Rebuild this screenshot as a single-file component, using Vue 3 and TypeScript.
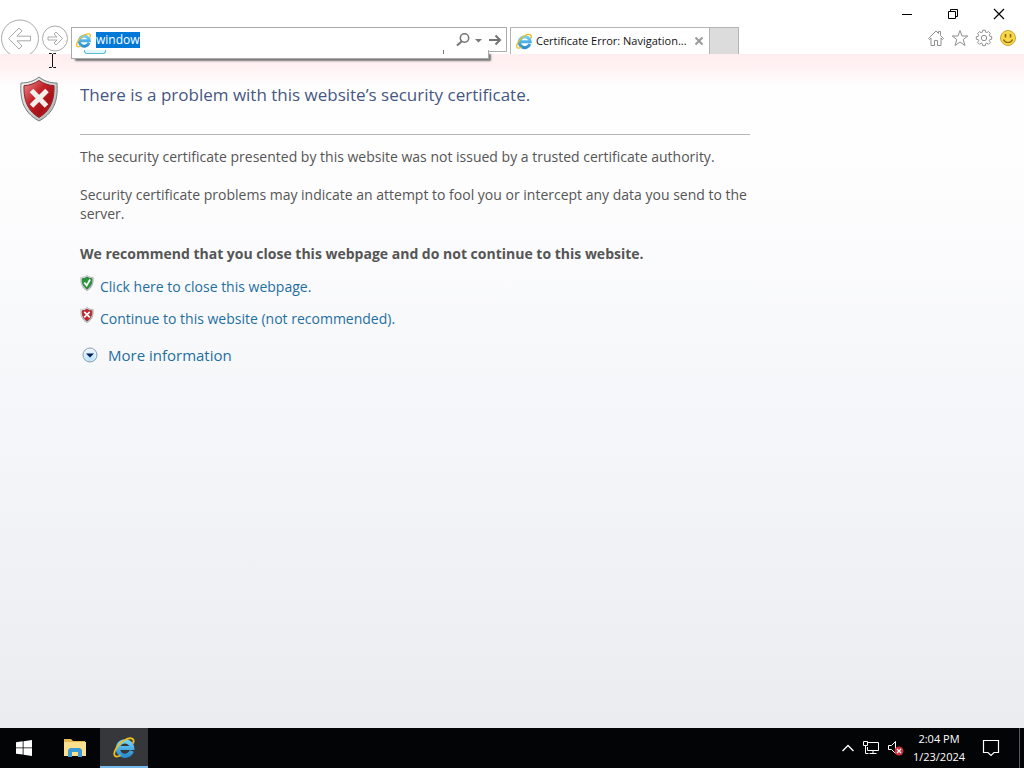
<script setup lang="ts">
import { nextTick, onMounted, ref } from 'vue'

const address = ref('window')
const addressBox = ref<HTMLInputElement | null>(null)
const tabs = [{ id: 1, title: 'Certificate Error: Navigation...' }]

onMounted(async () => {
  await nextTick()
  addressBox.value?.focus()
  addressBox.value?.select()
})
</script>

<template>
  <div class="desktop">
    <svg class="defs" width="0" height="0" aria-hidden="true">
      <defs>
        <linearGradient id="ieBlue" x1="0" y1="0" x2="0" y2="1">
          <stop offset="0" stop-color="#6fd0f6" />
          <stop offset="1" stop-color="#2a8fd4" />
        </linearGradient>
        <linearGradient id="shieldRed" x1="0" y1="0" x2="1" y2="1">
          <stop offset="0" stop-color="#e88f8f" />
          <stop offset="0.4" stop-color="#c4232b" />
          <stop offset="0.7" stop-color="#a80f17" />
          <stop offset="1" stop-color="#d9383c" />
        </linearGradient>
        <linearGradient id="shieldRim" x1="0" y1="0" x2="1" y2="1">
          <stop offset="0" stop-color="#f4f4f4" />
          <stop offset="1" stop-color="#a9adad" />
        </linearGradient>
        <radialGradient id="arrowBall" cx="0.5" cy="0.8" r="0.8">
          <stop offset="0" stop-color="#b7e4fa" />
          <stop offset="1" stop-color="#f4f8fc" />
        </radialGradient>
        <symbol id="ie" viewBox="0 0 24 24">
          <path fill="none" stroke="url(#ieBlue)" stroke-width="4.200" d="M19.800 16A7.200 7.200 0 1 1 20.200 13H7" />
          <path fill="none" stroke="#edbd21" stroke-width="1.800" d="M21 8.500C23.200 3.800 19.500 2 14.400 4.200 7.500 7.400 1.800 15.200 2.300 19.600c.4 2.600 3.200 2.400 6.400.6" />
        </symbol>
        <symbol id="shield" viewBox="0 0 40 46">
          <path fill="url(#shieldRim)" stroke="#777c7c" d="M20 1c5 4 11 6 18 6 1 14-1 29-18 38C3 36 1 21 2 7 9 7 15 5 20 1z" />
        </symbol>
      </defs>
    </svg>

    <header class="chrome">
      <nav class="nav" aria-label="History">
        <button class="plain" aria-label="Back">
          <svg width="40" height="35" viewBox="0 0 40 35" fill="none" stroke="#a9a9a9">
            <circle cx="20" cy="19.500" r="18.500" fill="#fff" />
            <path d="M8.500 19.500l10.500-10.500 3 3-5 5.200h13.500v4.600H17l5 5.200-3 3z" />
          </svg>
        </button>
        <button class="plain" aria-label="Forward">
          <svg width="28" height="35" viewBox="0 0 28 35" fill="none" stroke="#a9a9a9">
            <circle cx="14" cy="19.500" r="12.500" fill="#fff" />
            <path d="M21.500 19.500l-6.500-6.500-2 2 3 3H7v3h9l-3 3 2 2z" />
          </svg>
        </button>
      </nav>

      <form class="address" @submit.prevent>
        <svg width="17" height="18" aria-hidden="true"><use href="#ie" /></svg>
        <input ref="addressBox" v-model="address" type="text" aria-label="Address" spellcheck="false" autocomplete="off" />
        <button class="plain" type="button" aria-label="Search">
          <svg width="16" height="16" viewBox="0 0 16 16" fill="none" stroke="#737373">
            <circle cx="9.500" cy="6" r="4.200" stroke-width="1.500" />
            <path d="M6.500 9.500l-4.500 4" stroke-width="2" />
          </svg>
        </button>
        <button class="plain" type="button" aria-label="Show address list">
          <svg width="14" height="16" viewBox="0 0 14 16"><path d="M4 7h7l-3.500 3.500z" fill="#777" /></svg>
        </button>
        <button class="plain go" type="submit" aria-label="Go">
          <svg width="14" height="16" viewBox="0 0 14 16" fill="none" stroke="#737373" stroke-width="2"><path d="M1 8h11M7.500 3.500L12 8l-4.500 4.500" /></svg>
        </button>
        <div class="suggestions" aria-hidden="true">
          <span class="hint"></span><span class="tick"></span>
        </div>
      </form>

      <div class="tabs">
        <div v-for="tab in tabs" :key="tab.id" class="tab">
          <svg width="18" height="18" aria-hidden="true"><use href="#ie" /></svg>
          <span class="tab-title">{{ tab.title }}</span>
          <button class="plain" aria-label="Close tab">
            <svg width="10" height="10" viewBox="0 0 10 10" stroke="#9a9a9a" stroke-width="2"><path d="M1.500 1.500l7 7M8.500 1.500l-7 7" /></svg>
          </button>
        </div>
        <button class="new-tab" aria-label="New tab"></button>
      </div>

      <div class="corner">
        <div class="caption">
          <button class="plain" aria-label="Minimize"><svg width="12" height="12" viewBox="0 0 12 12" stroke="#000"><path d="M1 6.500h10" /></svg></button>
          <button class="plain" aria-label="Restore"><svg width="12" height="12" viewBox="0 0 12 12" stroke="#000" fill="none"><path d="M1.500 3.500h7v7h-7zM3.500 3.500v-2h7v7h-2" /></svg></button>
          <button class="plain" aria-label="Close"><svg width="12" height="12" viewBox="0 0 12 12" stroke="#000" stroke-width="1.200"><path d="M1 1l10 10M11 1L1 11" /></svg></button>
        </div>
        <div class="tools">
          <button class="plain" aria-label="Home">
            <svg width="18" height="18" viewBox="0 0 18 18" fill="none" stroke="#8f8f8f"><path d="M1.500 9.500L9 2l2.500 2.500v-2h2v4l3 3-1 1-1.500-1.500v7.500h-3.500v-5h-3v5H4V9L2.500 10.500z" /></svg>
          </button>
          <button class="plain" aria-label="Favorites">
            <svg width="18" height="18" viewBox="0 0 18 18" fill="none" stroke="#8f8f8f"><path d="M9 1.500l2 5.500h5.800l-4.600 3.600 1.800 5.900L9 13l-5 3.500 1.800-5.900L1.200 7H7z" /></svg>
          </button>
          <button class="plain" aria-label="Tools">
            <svg width="18" height="18" viewBox="0 0 18 18" fill="none" stroke="#8f8f8f">
              <path d="M7.300 3.200l.4-2h2.600l.4 2 1.100.5 1.700-1.200 1.900 1.900-1.200 1.700.5 1.100 2 .4v2.600l-2 .4-.5 1.100 1.200 1.700-1.900 1.900-1.700-1.200-1.100.5-.4 2H7.700l-.4-2-1.100-.5-1.700 1.200-1.900-1.900 1.200-1.700-.5-1.100-2-.4V7.700l2-.4.5-1.100-1.200-1.700 1.900-1.900 1.700 1.200z" /><circle cx="9" cy="9" r="2.700" />
            </svg>
          </button>
          <button class="plain" aria-label="Send feedback">
            <svg width="18" height="18" viewBox="0 0 18 18">
              <circle cx="9" cy="9" r="7.500" fill="#f8d848" stroke="#c9a63c" />
              <path d="M6.500 5v3.500M11.500 5v3.500" stroke="#8a6414" stroke-width="1.600" /><path d="M4.500 10.500c1.500 4 7.500 4 9 0" fill="none" stroke="#8a6414" stroke-width="1.200" />
            </svg>
          </button>
        </div>
      </div>
    </header>

    <main class="page">
      <svg class="big-shield" width="40" height="46" viewBox="0 0 40 46" aria-hidden="true">
        <use href="#shield" />
        <path fill="url(#shieldRed)" stroke="#8c2227" d="M20 4.500c4.500 3 9 4.800 15 5.200.3 12-2 24-15 31.800C7 33.700 4.700 21.700 5 9.700c6-.4 10.500-2.200 15-5.200z" />
        <path d="M12.500 14.500l15 15.500M28 14.500L12.500 30" stroke="#f3efeb" stroke-width="5" />
      </svg>
      <div class="content">
        <h1>There is a problem with this website’s security certificate.</h1>
        <p>The security certificate presented by this website was not issued by a trusted certificate authority.</p>
        <p>Security certificate problems may indicate an attempt to fool you or intercept any data you send to the server.</p>
        <p class="advice">We recommend that you close this webpage and do not continue to this website.</p>
        <div class="choice">
          <svg width="14" height="16" viewBox="0 0 40 46" aria-hidden="true">
            <use href="#shield" />
            <path fill="#28963b" stroke="#176b28" stroke-width="2" d="M20 6c4 3 8 4.500 14 5 .3 11-2 21-14 29C8 32 5.700 22 6 11c6-.500 10-2 14-5z" />
            <path d="M12 22l7 8 10-17" fill="none" stroke="#fff" stroke-width="5" />
          </svg>
          <a href="#close">Click here to close this webpage.</a>
        </div>
        <div class="choice">
          <svg width="14" height="16" viewBox="0 0 40 46" aria-hidden="true">
            <use href="#shield" />
            <path fill="#c5222d" stroke="#98242b" stroke-width="2" d="M20 6c4 3 8 4.500 14 5 .3 11-2 21-14 29C8 32 5.700 22 6 11c6-.500 10-2 14-5z" />
            <path d="M12 14l16 16M28 14L12 30" stroke="#fff" stroke-width="5" />
          </svg>
          <a href="#continue">Continue to this website (not recommended).</a>
        </div>
        <div class="more">
          <svg width="16" height="16" viewBox="0 0 16 16" aria-hidden="true">
            <circle cx="8" cy="8" r="7" fill="url(#arrowBall)" stroke="#8b9cb8" /><path d="M4 6.500h8L8 10.500z" fill="#061b57" />
          </svg>
          <a href="#more">More information</a>
        </div>
      </div>
      <svg class="pointer" width="9" height="17" viewBox="0 0 9 17" fill="none" stroke="#111" aria-hidden="true"><path d="M1 1.500h2.500l1 1 1-1H8M4.500 2v13M1 15.500h2.500l1-1 1 1H8" /></svg>
    </main>

    <footer class="taskbar">
      <button class="task" aria-label="Start">
        <svg width="16" height="16" viewBox="0 0 16 16" fill="#fff"><path d="M0 2.300l6.700-1v6.200H0zM7.500 1.200L16 0v7.500H7.500zM0 8.300h6.700v6.300L0 13.700zM7.500 8.300H16V16l-8.500-1.300z" /></svg>
      </button>
      <button class="task explorer" aria-label="File Explorer">
        <svg width="22" height="20" viewBox="0 0 22 20"><path d="M0 1h7l2 2h12v15H0z" fill="#e8b94c" /><path d="M0 4h22v14H0z" fill="#fbe08d" /><path d="M4 19v-7l2-2h10l2 2v7h-4v-5H8v5z" fill="#3b9bd6" /></svg>
      </button>
      <button class="task active" aria-label="Internet Explorer">
        <svg width="24" height="24"><use href="#ie" /></svg>
      </button>
      <div class="tray">
        <button class="plain" aria-label="Show hidden icons"><svg width="14" height="10" viewBox="0 0 14 10" fill="none" stroke="#fff" stroke-width="1.400"><path d="M1.500 8L7 2.500 12.500 8" /></svg></button>
        <button class="plain" aria-label="Network"><svg width="18" height="16" viewBox="0 0 18 16" fill="none" stroke="#fff"><path d="M6 2.500h10.500v8h-11V7M11 10.500v3M7.500 13.500h7M1.500 1.500h4v4h-4zM3.500 5.500v8h3" /></svg></button>
        <button class="plain" aria-label="Volume, muted"><svg width="18" height="16" viewBox="0 0 18 16" fill="none"><path d="M1.500 5.500h3l4-4v12l-4-4h-3z" stroke="#fff" /><circle cx="12" cy="11" r="4.500" fill="#ce2f3c" /><path d="M10 9l4 4M14 9l-4 4" stroke="#fff" stroke-width="1.200" /></svg></button>
        <time class="clock" datetime="2024-01-23T14:04"><span>2:04 PM</span><span>1/23/2024</span></time>
        <button class="plain" aria-label="Notifications"><svg width="18" height="18" viewBox="0 0 18 18" fill="none" stroke="#fff" stroke-width="1.200"><path d="M1.500 1.500h15v12H12l-3 3-3-3H1.500z" /></svg></button>
      </div>
      <button class="show-desktop" aria-label="Show desktop"></button>
    </footer>
  </div>
</template>

<style>
body {
  margin: 0;
}
</style>

<style scoped>
* {
  box-sizing: border-box;
}
.desktop {
  display: flex;
  flex-direction: column;
  min-height: 100vh;
  font-family: 'Open Sans', 'Noto Sans', sans-serif;
  font-size: 14px;
  color: #555;
  background: #fff;
}
.defs {
  position: absolute;
}
svg {
  display: block;
  flex: none;
}
.plain {
  display: block;
  padding: 0;
  border: 0;
  background: none;
}
.chrome {
  position: relative;
  z-index: 1;
  display: flex;
  align-items: flex-end;
  height: 54px;
}
.nav {
  display: flex;
  flex: none;
  gap: 1px;
  width: 71px;
}
.address {
  position: relative;
  display: flex;
  align-items: center;
  flex: 0 1 436px;
  min-width: 200px;
  height: 25px;
  margin: 0 3px 2px 0;
  padding: 0 4px 0 3px;
  border: 1px solid #ababab;
  background: #fff;
}
.address input {
  flex: 1;
  min-width: 0;
  height: 16px;
  margin-left: 4px;
  padding: 0;
  border: 0;
  outline: 0;
  background: none;
  font: 12px/16px 'Open Sans', 'Noto Sans', sans-serif;
  color: #000;
}
.address input::selection {
  background: #0078d7;
  color: #fff;
}
.go {
  margin-left: 3px;
}
.suggestions {
  position: absolute;
  top: 22px;
  left: -1px;
  right: 17px;
  height: 9px;
  border: 1px solid #ababab;
  border-top: 0;
  background: #fff;
  box-shadow: 3px 3px 2px -1px #777;
  clip-path: inset(0 -6px -6px 0);
}
.hint {
  position: absolute;
  top: 0;
  left: 12px;
  width: 22px;
  height: 4px;
  border: 1px solid #58bfd3;
  border-top: 0;
  border-radius: 0 0 3px 3px;
  background: #def8fd;
}
.tick {
  position: absolute;
  top: 0;
  right: 44px;
  width: 1px;
  height: 4px;
  background: #777;
}
.tabs {
  display: flex;
  flex: none;
}
.tab {
  display: flex;
  align-items: center;
  width: 200px;
  height: 27px;
  padding: 0 5px 0 4px;
  border: 1px solid #b4b4b4;
  border-bottom: 0;
  background: #fff;
}
.tab-title {
  flex: 1;
  margin-left: 3px;
  font-size: 11px;
  line-height: 16px;
  white-space: nowrap;
  color: #111;
}
.new-tab {
  width: 29px;
  height: 27px;
  padding: 0;
  border: 1px solid #b4b4b4;
  border-left: 0;
  border-bottom: 0;
  background: #dcdcdc;
}
.corner {
  display: flex;
  flex-direction: column;
  justify-content: space-between;
  align-items: flex-end;
  align-self: stretch;
  margin-left: auto;
  padding: 8px 7px 7px 0;
}
.caption {
  display: flex;
  gap: 34px;
  padding-right: 12px;
}
.tools {
  display: flex;
  gap: 6px;
}
.page {
  position: relative;
  display: flex;
  flex: 1;
  align-items: flex-start;
  padding: 22px 19px;
  background:
    linear-gradient(#ffeeef 0, #fff0f1 10px, rgba(255, 255, 255, 0) 34px),
    linear-gradient(#fff 0, #fdfdfe 20%, #f4f5f8 60%, #eaecf0 100%);
}
.big-shield {
  margin-right: 21px;
}
.content {
  flex: 0 1 670px;
}
h1 {
  margin: 0 0 12px;
  padding: 6px 0 26px;
  border-bottom: 1px solid #b6b6b6;
  font-size: 17px;
  font-weight: 400;
  line-height: 26px;
  color: #465782;
}
p {
  margin: 0 0 19px;
  line-height: 19px;
}
.advice {
  margin: 0 0 12px;
  padding-top: 2px;
  font-weight: 700;
}
.choice {
  display: flex;
  align-items: flex-start;
  gap: 6px;
  height: 32px;
}
a {
  color: #1f6f9f;
  text-decoration: none;
}
.choice a {
  padding-top: 2px;
  line-height: 19px;
}
.more {
  display: flex;
  align-items: center;
  gap: 10px;
  padding: 4px 0 0 2px;
  font-size: 15px;
  line-height: 24px;
}
.pointer {
  position: absolute;
  top: -2px;
  left: 48px;
}
.taskbar {
  display: flex;
  height: 40px;
  background: #030406;
}
.task {
  display: grid;
  place-items: center;
  width: 48px;
  padding: 0;
  border: 0;
  background: none;
}
.explorer {
  margin: 0 1px 0 3px;
}
.active {
  border-bottom: 2px solid #76b9ed;
  background: #35373a;
}
.tray {
  display: flex;
  align-items: center;
  gap: 7px;
  margin-left: auto;
  padding-right: 19px;
}
.clock {
  display: flex;
  flex-direction: column;
  align-items: center;
  width: 54px;
  margin: 0 9px 0 0;
  font-size: 11px;
  line-height: 18px;
  color: #fff;
}
.show-desktop {
  width: 5px;
  padding: 0;
  border: 0;
  border-left: 1px solid #56585b;
  background: none;
}
</style>
